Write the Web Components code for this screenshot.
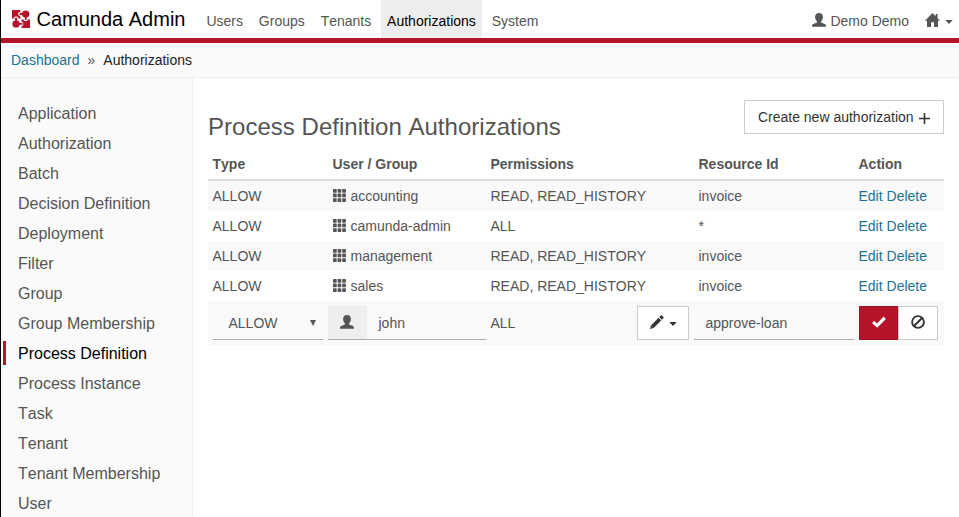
<!DOCTYPE html>
<html lang="en"><head><meta charset="utf-8"><title>Camunda Admin</title>
<style>
html,body{margin:0;height:100%;overflow:hidden;background:#fff}
body{font:14px/20px "Liberation Sans",Arial,sans-serif;color:#555;font-kerning:none}
</style></head><body>
<admin-app></admin-app>
<script>
const def=(name,html,init)=>{
  const t=document.createElement('template');
  t.innerHTML='<style>*{box-sizing:border-box}</style>'+html;
  customElements.define(name,class extends HTMLElement{
    constructor(){super();this.attachShadow({mode:'open'}).appendChild(t.content.cloneNode(true));}
    connectedCallback(){if(init)init(this,this.shadowRoot);}
  });
};
const ICONS={
  user:[14,14,'<path d="M7 0C4.600 0 3.100 1.500 3.100 3.700c0 2 .7 3.700 1.900 4.700v.9C4.800 9.900 1.800 10.500.7 11.300.1 11.800 0 12.600 0 13.700h14c0-1.100-.1-1.900-.7-2.400C12.200 10.500 9.200 9.900 9 9.300v-.9c1.200-1 1.900-2.700 1.900-4.700C10.900 1.500 9.400 0 7 0z"/>'],
  home:[15,14,'<path d="M7.500 0 0 7.800h2V14h4V9.300h3V14h4V7.800h2L12.600 5.200V1h-2v2.200z"/>'],
  grid:[13,13,'<g>'+[0,4.600,9.200].map(y=>[0,4.600,9.200].map(x=>`<rect x="${x}" y="${y}" width="3.700" height="3.700" rx=".6"/>`).join('')).join('')+'</g>'],
  pencil:[14,14,'<path d="M0 14 1 10.400 8.600 2.800 11.200 5.400 3.600 13z"/><path d="m9.300 2.100 1.500-1.500q.6-.6 1.200 0l1.400 1.400q.6.6 0 1.200L11.900 4.700z"/><path d="M1.600 11 3 12.400" stroke="#fff" stroke-width=".6" opacity=".7"/>'],
  ok:[14,12,'<path d="M0 7.100 2.200 4.900 5 7.600 11.600.6 13.900 2.900 5.200 11.800z"/>'],
  ban:[14,14,'<g fill="none" stroke="currentColor" stroke-width="1.900"><circle cx="7" cy="7" r="5.900"/><path d="m3 11 8-8"/></g>'],
  plus:[11,11,'<path d="M4.700 0h1.600v4.700H11v1.600H6.300V11H4.700V6.300H0V4.700h4.700z"/>'],
  caret:[8,4,'<path d="M.3 0h7.400L4 4z"/>'],
  arrow:[6,6,'<path d="M0 0h6L3 6z"/>'],
  logo:[18,18,'<g fill="#b5152b"><path d="M0 0h8.400v1.800C7 1.600 6.200 2.700 6.200 4S7 6.300 8.400 6.200v2.200H6.300C6.300 7 5.300 6.400 4.100 6.400S1.900 7 1.900 8.400H0z"/><circle cx="13.700" cy="4.100" r="3.700"/><circle cx="8.700" cy="4" r="1.300"/><path d="M8.700 3.300H11v1.500H8.700zM12.900 7h1.600v3h-1.600z"/><circle cx="4.100" cy="13.900" r="3.700"/><circle cx="4.100" cy="8.900" r="1.300"/><path d="M3.400 8.900h1.500v2H3.400zM7 13.100h3.500v1.600H7z"/><path d="M9.500 9.400h2.100c.2 1.100 1 1.700 2.100 1.700s1.900-.6 2.100-1.700H18V18H9.500v-2c1.200-.1 1.800-1 1.800-2.100s-.6-2-1.800-2.100z"/></g>']
};
def('ui-icon','<style>:host{display:inline-block;flex:none}svg{display:block;fill:currentColor}</style><span></span>',(h,r)=>{
  const [w,g,p]=ICONS[h.getAttribute('name')];
  r.querySelector('span').innerHTML=`<svg width="${w}" height="${g}" viewBox="0 0 ${w} ${g}">${p}</svg>`;
});
def('nav-item','<style>:host{display:flex;height:38px;padding:4px 6.400px 0;align-items:center}:host([active]){background:#ededed;color:#000}</style><slot></slot>');
def('top-bar',`<style>
:host{display:flex;height:43px;border-bottom:5px solid #b5152b;padding:0 6px 0 11px;align-items:flex-start}
.brand{display:flex;align-items:center;height:38px;width:188px;gap:6.500px;font-size:20px;color:#000;white-space:nowrap}
nav{display:flex;gap:3.100px}.right{margin-left:auto;display:flex;height:38px;padding-top:3px;align-items:center}
.demo{margin:1px 16px 0 4px}.right ui-icon[name=caret]{margin:3px 0 0 5px}.right ui-icon[name=user]{margin-top:-1px}.right ui-icon[name=home]{margin-top:-1px}</style>
<div class="brand"><ui-icon name="logo"></ui-icon><span>Camunda Admin</span></div>
<nav><nav-item>Users</nav-item><nav-item>Groups</nav-item><nav-item>Tenants</nav-item><nav-item active>Authorizations</nav-item><nav-item>System</nav-item></nav>
<div class="right"><ui-icon name="user"></ui-icon><span class="demo">Demo Demo</span><ui-icon name="home"></ui-icon><ui-icon name="caret"></ui-icon></div>`);
def('bread-crumbs',`<style>:host{display:flex;height:35px;padding:0 10px;align-items:center;background:#fafafa;border-bottom:1px solid #eee;color:#222}a{color:#207295}i{font-style:normal;color:#555;margin:0 8px}</style><a>Dashboard</a><i>»</i><span>Authorizations</span>`);
def('side-link','<style>:host{display:flex;height:24px;margin:0 0 6px 2px;padding:2px 0 0 12px;border-left:3px solid transparent;align-items:center;font-size:16px;box-sizing:border-box}:host([active]){color:#000;border-color:#b5152b}</style><slot></slot>');
def('side-nav','<style>:host{display:block;width:192px;box-sizing:border-box;flex:none;background:#fafafa;border-right:1px solid #eee;padding-top:23px;overflow:hidden}</style><nav></nav>',(h,r)=>{
  r.querySelector('nav').innerHTML=['Application','Authorization','Batch','Decision Definition','Deployment','Filter','Group','Group Membership','Process Definition','Process Instance','Task','Tenant','Tenant Membership','User'].map(t=>`<side-link${t==='Process Definition'?' active':''}>${t}</side-link>`).join('');
});
def('ui-button','<style>:host{display:flex;height:34px;border:1px solid #ccc;background:#fff;color:#333;align-items:center;justify-content:center}:host([primary]){background:#b5152b;border-color:#9e1226;color:#fff}</style><slot></slot>');
def('auth-row',`<style>:host{display:grid;grid-template-columns:120px 158px 208px 160px 90px;height:30px;align-items:center;white-space:nowrap}:host([odd]){background:#f9f9f9}
div{padding-left:4.500px}.g{display:flex;align-items:center;gap:5px}.g ui-icon{margin-top:-1px}a{color:#207295}</style>
<div>ALLOW</div><div class="g"><ui-icon name="grid"></ui-icon><slot name="group"></slot></div><div><slot name="perm"></slot></div><div><slot name="res"></slot></div><div><a>Edit</a> <a>Delete</a></div>`);
def('auth-head',`<style>:host{display:grid;grid-template-columns:120px 158px 208px 160px 90px;height:32px;padding-bottom:1px;align-items:center;font-weight:bold;border-bottom:2px solid #ddd}span{padding-left:4.500px}</style><span>Type</span><span>User / Group</span><span>Permissions</span><span>Resource Id</span><span>Action</span>`);
def('auth-edit',`<style>:host{display:grid;grid-template-columns:120px 158px 208px 160px 90px;height:44px;background:#f9f9f9;padding-top:5px;align-items:start}
.f{height:34px;border-bottom:1px solid #aaa;display:flex;align-items:center}.sel{margin-left:5px;width:110px;padding:0 7px 0 15.500px;justify-content:space-between}
.usr{width:158px}.add{width:39px;height:33px;background:#eee;display:flex;align-items:center;justify-content:center;margin-right:11.500px}.add ui-icon{margin:-1px 1px 0 0}
.p{display:flex;justify-content:space-between;align-items:center;padding:0 5px 0 4.500px}.p ui-button{width:52px;gap:5px}.p ui-icon[name=pencil]{margin-top:-2px}.p ui-icon[name=caret]{margin-top:2px}
.res{width:160px;padding-left:11.500px}.act{display:flex;padding-left:5px}.act ui-button{width:40px}.act ui-button:first-child{width:39px}.act ui-icon{margin-top:-2px}</style>
<div class="f sel"><span>ALLOW</span><ui-icon name="arrow"></ui-icon></div>
<div class="f usr"><span class="add"><ui-icon name="user"></ui-icon></span><span>john</span></div>
<div class="p"><span>ALL</span><ui-button><ui-icon name="pencil"></ui-icon><ui-icon name="caret"></ui-icon></ui-button></div>
<div class="f res">approve-loan</div>
<div class="act"><ui-button primary><ui-icon name="ok"></ui-icon></ui-button><ui-button><ui-icon name="ban"></ui-icon></ui-button></div>`);
def('auth-panel',`<style>:host{display:block;flex:1;padding:22px 15px 0}
header{display:flex;justify-content:space-between;height:49px}h1{margin:12px 0 0;font-size:24px;line-height:30px;font-weight:normal;letter-spacing:.02px}
header ui-button{width:200px;gap:5.500px}header ui-icon{margin-top:3px}</style>
<header><h1>Process Definition Authorizations</h1><ui-button>Create new authorization<ui-icon name="plus"></ui-icon></ui-button></header>
<auth-head></auth-head><section></section><auth-edit></auth-edit>`,(h,r)=>{
  r.querySelector('section').innerHTML=[['accounting','READ, READ_HISTORY','invoice'],['camunda-admin','ALL','*'],['management','READ, READ_HISTORY','invoice'],['sales','READ, READ_HISTORY','invoice']].map(([g,p,s],i)=>`<auth-row${i%2?'':' odd'}><span slot="group">${g}</span><span slot="perm">${p}</span><span slot="res">${s}</span></auth-row>`).join('');
});
def('admin-app',`<style>:host{display:flex;flex-direction:column;height:517px;border-left:1px solid #000;overflow:hidden}main{display:flex;flex:1;min-height:0}</style><top-bar></top-bar><bread-crumbs></bread-crumbs><main><side-nav></side-nav><auth-panel></auth-panel></main>`);
</script></body></html>
